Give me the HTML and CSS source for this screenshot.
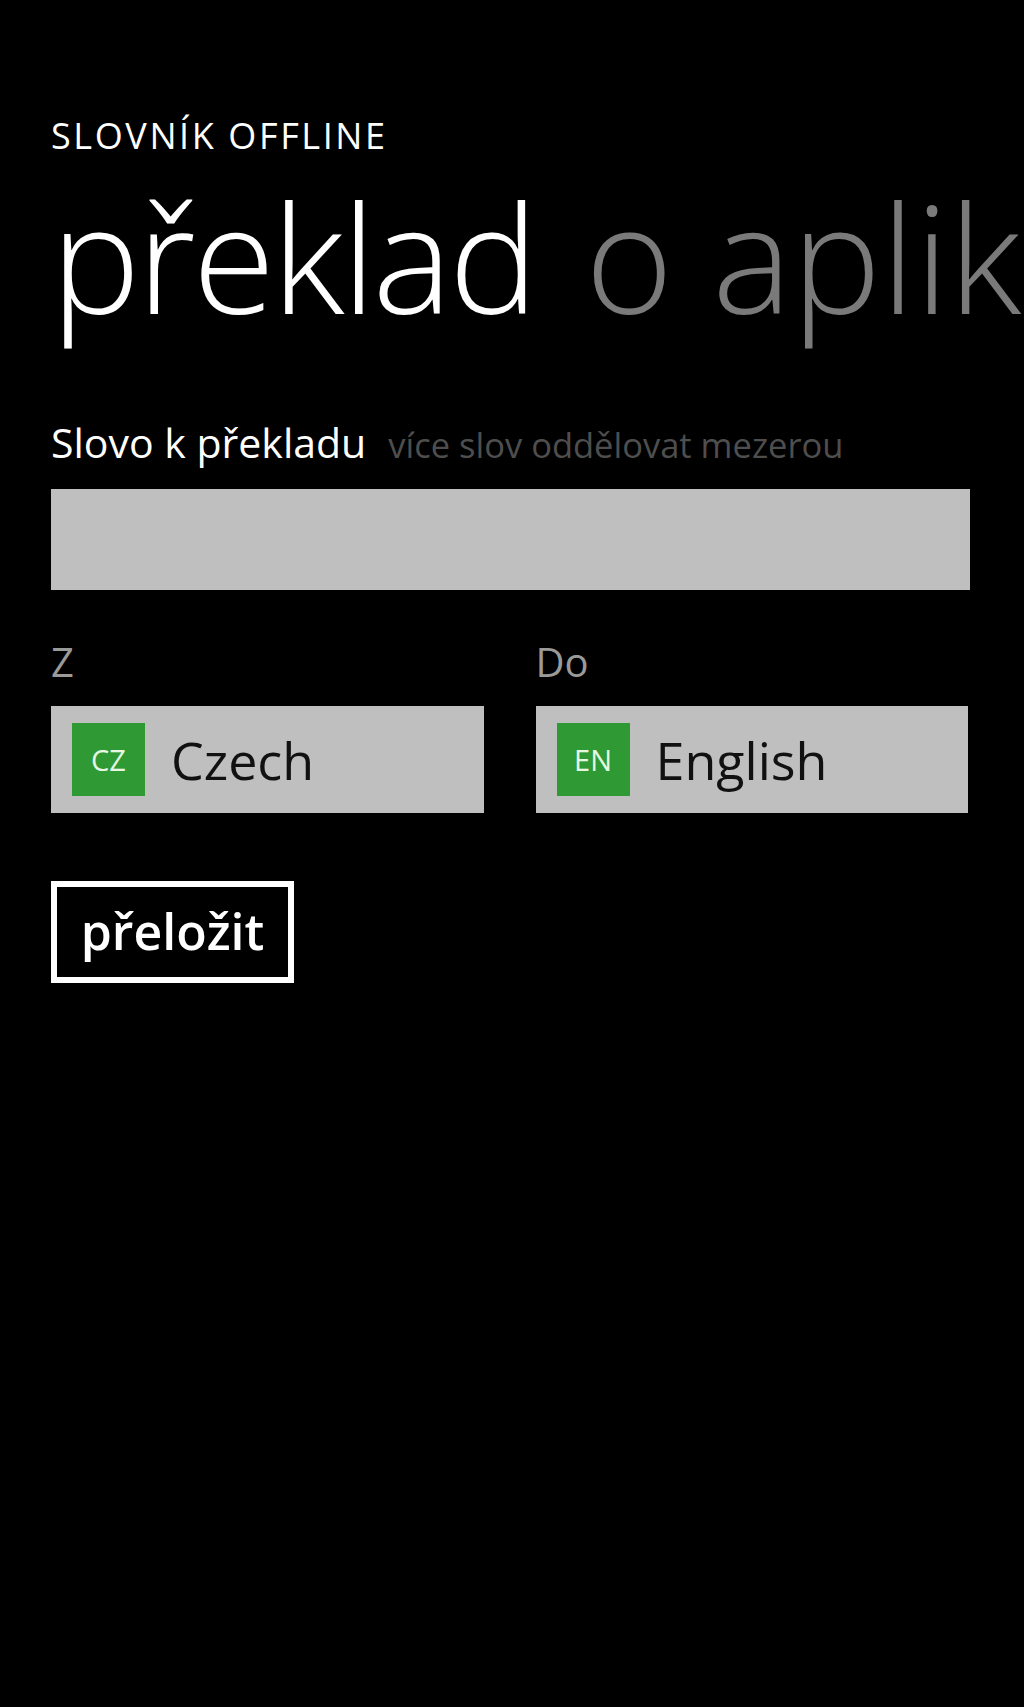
FILE: index.html
```html
<!DOCTYPE html>
<html lang="cs">
<head>
<meta charset="utf-8">
<title>Slovník offline</title>
<link rel="stylesheet" href="styles.css">
</head>
<body>
<div class="page">
  <div class="app-title">SLOVNÍK OFFLINE</div>
  <div class="pivot">
    <span class="pivot-item active">překlad</span>
    <span class="pivot-item">o aplikaci</span>
  </div>

  <div class="field-label">
    <span class="label-main">Slovo k překladu</span>
    <span class="label-hint">více slov oddělovat mezerou</span>
  </div>
  <div class="text-input"></div>

  <div class="lang-grid">
    <div class="lang-col">
      <div class="lang-label">Z</div>
      <div class="combo">
        <span class="badge">CZ</span>
        <span class="combo-text">Czech</span>
      </div>
    </div>
    <div class="lang-col">
      <div class="lang-label">Do</div>
      <div class="combo">
        <span class="badge">EN</span>
        <span class="combo-text">English</span>
      </div>
    </div>
  </div>

  <div class="button">přeložit</div>
</div>
</body>
</html>
```
FILE: styles.css
```css
html, body {
  margin: 0;
  padding: 0;
  background: #000;
}
body {
  width: 1024px;
  height: 1707px;
  overflow: hidden;
  font-family: "Open Sans", "Noto Sans", sans-serif;
  color: #fff;
}
.page {
  padding: 117px 0 0 51px;
}
.app-title {
  font-size: 36px;
  line-height: 37px;
  height: 37px;
  letter-spacing: 2.6px;
  color: #fff;
}
.pivot {
  margin-top: 27px;
  display: flex;
  white-space: nowrap;
  font-size: 150px;
  line-height: 150px;
  height: 150px;
  font-weight: 300;
  gap: 50px;
}
.pivot-item {
  color: #7a7a7a;
  letter-spacing: 0;
}
.pivot-item.active {
  color: #fff;
  letter-spacing: -3px;
}
.field-label {
  margin-top: 91px;
  display: flex;
  align-items: baseline;
  gap: 22px;
  line-height: 41px;
  height: 41px;
}
.label-main {
  font-size: 41px;
  color: #fff;
}
.label-hint {
  font-size: 34.5px;
  color: #4e4e4e;
}
.text-input {
  margin-top: 26px;
  width: 919px;
  height: 101px;
  background: #bfbfbf;
}
.lang-grid {
  margin-top: 52px;
  width: 917px;
  display: grid;
  grid-template-columns: 1fr 1fr;
  column-gap: 52px;
}
.lang-label {
  font-size: 40px;
  line-height: 40px;
  color: #9a9a9a;
}
.combo {
  margin-top: 24px;
  height: 107px;
  background: #bfbfbf;
  display: flex;
  align-items: center;
  padding-left: 21px;
  box-sizing: border-box;
}
.badge {
  width: 73px;
  height: 73px;
  background: #2f9a34;
  color: #e6f7e4;
  font-size: 29px;
  line-height: 73px;
  text-align: center;
  flex: none;
}
.combo-text {
  margin-left: 26px;
  font-size: 52px;
  line-height: 52px;
  color: #111;
}
.button {
  margin-top: 68px;
  width: 243px;
  height: 102px;
  box-sizing: border-box;
  border: 6px solid #fff;
  display: flex;
  align-items: center;
  justify-content: center;
  font-size: 50px;
  font-weight: 600;
  color: #fff;
  padding-bottom: 2px;
}
```
